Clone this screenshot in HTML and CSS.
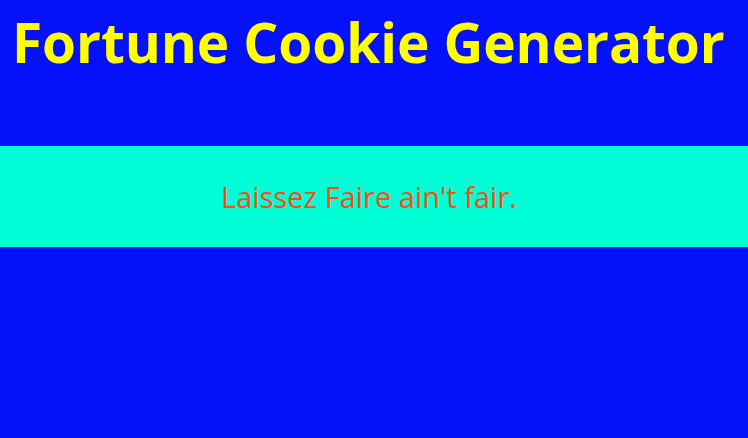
FILE: index.html
```html
<!DOCTYPE html>
<html>
<head>
<meta charset="utf-8">
<link rel="stylesheet" href="styles.css">
</head>
<body>
<h1 class="title">Fortune Cookie Generator</h1>
<div class="band">
  <p class="fortune">Laissez Faire ain't fair.</p>
</div>
</body>
</html>
```
FILE: styles.css
```css
html, body {
  margin: 0;
  padding: 0;
  background: #0510fb;
  height: 100%;
}
.title {
  margin: 0;
  padding: 10px 0 0 12px;
  height: 146px;
  box-sizing: border-box;
  font-family: "Open Sans", sans-serif;
  font-weight: 700;
  font-size: 55px;
  line-height: 64px;
  letter-spacing: -0.1px;
  color: #ffff00;
  white-space: nowrap;
}
.band {
  background: #00ffd6;
  height: 101px;
  display: flex;
  align-items: center;
  justify-content: center;
}
.fortune {
  margin: 0 10px 0 0;
  font-family: "Open Sans", sans-serif;
  font-size: 29px;
  color: #ff4a10;
}
```
